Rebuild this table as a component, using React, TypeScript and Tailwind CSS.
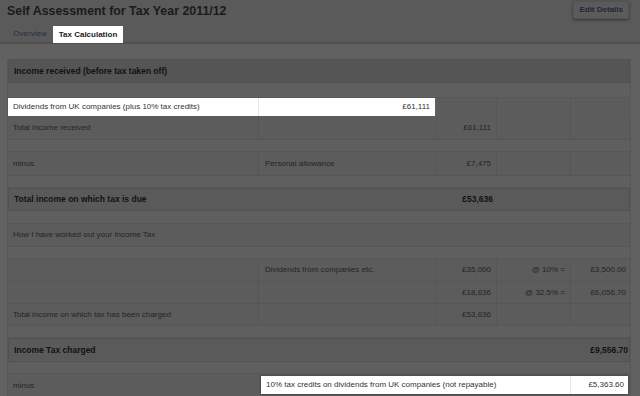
import React from "react";

const cols = "grid grid-cols-[251px_178px_60px_74px_60px]";
const cellB = "border-r border-[#565656]";

function Spacer({ h }: { h: string }) {
  return <div className={`${h} border-b border-[#585858] bg-[#5f5f5f]`} />;
}

function Row({
  h,
  cells,
}: {
  h: string;
  cells: [string, string, string, string, string];
}) {
  return (
    <div className={`${cols} ${h} border-b border-[#565656] bg-[#5c5c5c] text-[8px] text-[#242424]`}>
      <div className={`${cellB} flex items-center pl-[5px]`}>{cells[0]}</div>
      <div className={`${cellB} flex items-center pl-[6px]`}>{cells[1]}</div>
      <div className={`${cellB} flex items-center justify-end pr-[5px]`}>{cells[2]}</div>
      <div className={`${cellB} flex items-center justify-end pr-[5px]`}>{cells[3]}</div>
      <div className="flex items-center justify-end pr-[5px]">{cells[4]}</div>
    </div>
  );
}

function BoldRow({
  h,
  label,
  amount,
  col,
  dark,
}: {
  h: string;
  label: string;
  amount?: string;
  col?: 3 | 5;
  dark?: boolean;
}) {
  return (
    <div
      className={`${cols} ${h} border border-[#525252] ${dark ? "bg-[#555555]" : "bg-[#5a5a5a]"} text-[8.5px] font-bold text-[#121212]`}
    >
      <div className="col-span-2 flex items-center pl-[5px]">{label}</div>
      {col === 3 ? (
        <>
          <div className="flex items-center justify-end pr-[5px]">{amount}</div>
          <div />
          <div />
        </>
      ) : col === 5 ? (
        <>
          <div />
          <div />
          <div className="flex items-center justify-end pr-[4px]">{amount}</div>
        </>
      ) : null}
    </div>
  );
}

export default function App() {
  return (
    <div
      className="w-[640px] h-[396px] overflow-hidden bg-[#616161]"
      style={{ fontFamily: '"Liberation Sans", Arial, sans-serif' }}
    >
      <div className="bg-[#5a5a5a] border-b-2 border-[#505050]">
        <div className="flex items-start justify-between pl-[7px] pr-[11px] pt-[1px] h-[26px]">
          <div className="pt-[2px] text-[12.4px] font-bold text-[#1a1a1a] leading-[16px]">
            Self Assessment for Tax Year 2011/12
          </div>
          <div className="h-[18px] px-[5px] flex items-center bg-[#5b5b5b] border border-[#535353] rounded-[2px] shadow-[0_1px_3px_rgba(0,0,0,0.45)] text-[8px] font-bold text-[#1d2838]">
            Edit Details
          </div>
        </div>
        <div className="flex items-end pl-[7px] h-[16px]">
          <div className="w-[46px] h-[16px] flex items-center justify-center text-[8px] text-[#24303e]">
            Overview
          </div>
          <div className="w-[70px] h-[17px] -mb-[1px] flex items-center justify-center bg-white text-[8px] font-bold text-[#222]">
            Tax Calculation
          </div>
        </div>
      </div>

      <div className="pt-[15px] pl-[7px] pr-[9px]">
        <div className="border-l border-r border-[#575757]">
          <BoldRow h="h-[24px]" label="Income received (before tax taken off)" dark />
          <Spacer h="h-[15px]" />
          <div className={`${cols} h-[18px] text-[8px] text-[#333]`}>
            <div className="bg-white border-r border-[#e6e6e6] flex items-center pl-[5px]">
              Dividends from UK companies (plus 10% tax credits)
            </div>
            <div className="bg-white mr-[2px] flex items-center justify-end pr-[5px]">£61,111</div>
            <div className={`${cellB} bg-[#5c5c5c]`} />
            <div className={`${cellB} bg-[#5c5c5c]`} />
            <div className="bg-[#5c5c5c]" />
          </div>
          <Row h="h-[24px]" cells={["Total income received", "", "£61,111", "", ""]} />
          <Spacer h="h-[12px]" />
          <Row h="h-[24px]" cells={["minus", "Personal allowance", "£7,475", "", ""]} />
          <Spacer h="h-[12px]" />
          <BoldRow h="h-[23px]" label="Total income on which tax is due" amount="£53,636" col={3} />
          <Spacer h="h-[13px]" />
          <div className="h-[23px] border-b border-[#565656] bg-[#5c5c5c] flex items-center pl-[5px] text-[8px] text-[#242424]">
            How I have worked out your Income Tax
          </div>
          <Spacer h="h-[12px]" />
          <Row
            h="h-[23px]"
            cells={["", "Dividends from companies etc.", "£35,000", "@ 10% =", "£3,500.00"]}
          />
          <Row h="h-[22px]" cells={["", "", "£18,636", "@ 32.5% =", "£6,056.70"]} />
          <Row
            h="h-[22px]"
            cells={["Total income on which tax has been charged", "", "£53,636", "", ""]}
          />
          <Spacer h="h-[12px]" />
          <BoldRow h="h-[24px]" label="Income Tax charged" amount="£9,556.70" col={5} />
          <Spacer h="h-[12px]" />
          <div className="grid grid-cols-[251px_372px] h-[24px] bg-[#5c5c5c] text-[8px]">
            <div className="flex items-center pl-[5px] text-[#242424]">minus</div>
            <div className="pt-[2px] pl-[2px] pr-[3px]">
              <div className="h-[18px] bg-white shadow-[0_0_2px_rgba(0,0,0,0.5)] grid grid-cols-[310px_1fr] text-[#333]">
                <div className="flex items-center pl-[5px] border-r border-[#e6e6e6]">
                  10% tax credits on dividends from UK companies (not repayable)
                </div>
                <div className="flex items-center justify-end pr-[4px]">£5,363.60</div>
              </div>
            </div>
          </div>
        </div>
      </div>
    </div>
  );
}
